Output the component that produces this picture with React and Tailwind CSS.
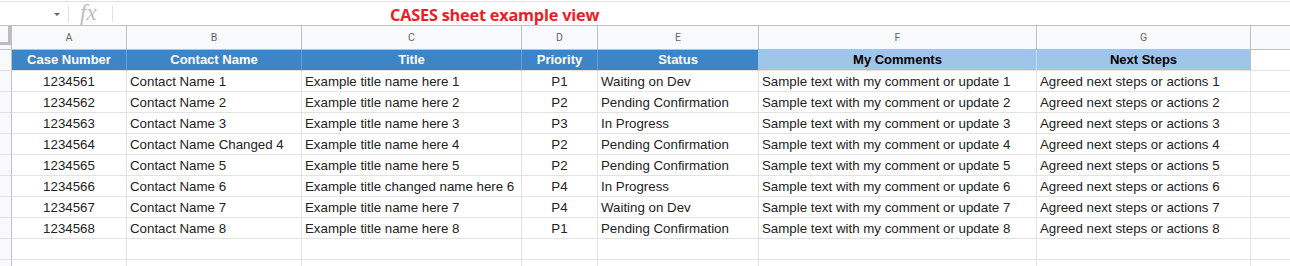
const cols = 'grid grid-cols-[12px_115px_175px_220px_76px_161px_278px_214px_1fr]';

const letters = ['A', 'B', 'C', 'D', 'E', 'F', 'G'];

const headers = [
  { label: 'Case Number', dark: true },
  { label: 'Contact Name', dark: true },
  { label: 'Title', dark: true },
  { label: 'Priority', dark: true },
  { label: 'Status', dark: true },
  { label: 'My Comments', dark: false },
  { label: 'Next Steps', dark: false },
];

const rows = [
  ['1234561', 'Contact Name 1', 'Example title name here 1', 'P1', 'Waiting on Dev', 1],
  ['1234562', 'Contact Name 2', 'Example title name here 2', 'P2', 'Pending Confirmation', 2],
  ['1234563', 'Contact Name 3', 'Example title name here 3', 'P3', 'In Progress', 3],
  ['1234564', 'Contact Name Changed 4', 'Example title name here 4', 'P2', 'Pending Confirmation', 4],
  ['1234565', 'Contact Name 5', 'Example title name here 5', 'P2', 'Pending Confirmation', 5],
  ['1234566', 'Contact Name 6', 'Example title changed name here 6', 'P4', 'In Progress', 6],
  ['1234567', 'Contact Name 7', 'Example title name here 7', 'P4', 'Waiting on Dev', 7],
  ['1234568', 'Contact Name 8', 'Example title name here 8', 'P1', 'Pending Confirmation', 8],
];

function RowHead() {
  return <div className="bg-[#f8f9fa] border-r border-b border-[#c0c0c0] border-b-[#e2e2e3]" />;
}

function Cell({ children, center }) {
  return (
    <div
      className={
        'border-r border-b border-[#e2e2e3] px-[3px] pt-[2px] flex items-center whitespace-nowrap overflow-hidden ' +
        (center ? 'justify-center' : '')
      }
    >
      {children}
    </div>
  );
}

export default function App() {
  return (
    <div className="w-[1290px] h-[266px] bg-white overflow-hidden font-['Liberation_Sans',Arial,sans-serif] text-[13.3px] text-[#222]">
      {/* formula bar */}
      <div className="h-[26px] pt-px border-b border-[#c0c0c0]">
        <div className="h-[24px] border-t border-[#e0e0e0] flex items-center">
          <div className="w-[68px] flex justify-end pr-[8px]">
            <span className="w-0 h-0 border-l-[3px] border-r-[3px] border-t-[3px] border-l-transparent border-r-transparent border-t-[#666] mt-px" />
          </div>
          <div className="w-px h-[16px] bg-[#e0e0e0]" />
          <span className="ml-[11px] w-[32px] font-['Liberation_Serif',serif] italic text-[23px] leading-none text-[#bdbdbd] -mt-[3px]">
            fx
          </span>
          <div className="w-px h-[16px] bg-[#e0e0e0]" />
          <span className="ml-[277px] font-['Open_Sans',sans-serif] font-bold text-[16.3px] text-[#ee1c25] tracking-[-0.2px] mt-[3px]">
            CASES sheet example view
          </span>
        </div>
      </div>

      {/* column letters */}
      <div className={cols + ' h-[24px] bg-[#f8f9fa] font-["Roboto",sans-serif] text-[10.5px] text-[#666]'}>
        <div className="relative border-r border-b border-[#c0c0c0]">
          <div className="absolute left-[8px] top-0 w-[3px] h-[19px] bg-[#bdbdbd]" />
          <div className="absolute left-0 top-[16px] w-[11px] h-[3px] bg-[#bdbdbd]" />
        </div>
        {letters.map((l) => (
          <div key={l} className="border-r border-b border-[#c0c0c0] flex items-center justify-center">
            {l}
          </div>
        ))}
        <div className="border-b border-[#c0c0c0]" />
      </div>

      {/* header row */}
      <div className={cols + ' h-[21px] font-bold text-[13px]'}>
        <RowHead />
        {headers.map((h, i) => (
          <div
            key={h.label}
            className={
              'border-b flex items-center justify-center whitespace-nowrap ' +
              (h.dark
                ? 'bg-[#3d85c6] text-white border-b-[#e2e2e3] border-r ' + (i === 4 ? 'border-r-[#9fc5e8]' : 'border-r-[#6a9fd3]')
                : 'bg-[#9fc5e8] text-black border-b-[#e2e2e3] border-r ' + (i === 6 ? 'border-r-[#c0c0c0]' : 'border-r-[#c6dcf0]'))
            }
          >
            {h.label}
          </div>
        ))}
        <div className="border-b border-[#e2e2e3]" />
      </div>

      {/* data rows */}
      {rows.map((r) => (
        <div key={r[0]} className={cols + ' h-[21px]'}>
          <RowHead />
          <Cell center>{r[0]}</Cell>
          <Cell>{r[1]}</Cell>
          <Cell>{r[2]}</Cell>
          <Cell center>{r[3]}</Cell>
          <Cell>{r[4]}</Cell>
          <Cell>Sample text with my comment or update {r[5]}</Cell>
          <Cell>Agreed next steps or actions {r[5]}</Cell>
          <div className="border-b border-[#e2e2e3]" />
        </div>
      ))}

      {/* empty rows */}
      {[0, 1].map((k) => (
        <div key={k} className={cols + ' h-[21px]'}>
          <RowHead />
          {letters.map((l) => (
            <Cell key={l} />
          ))}
          <div className="border-b border-[#e2e2e3]" />
        </div>
      ))}
    </div>
  );
}
